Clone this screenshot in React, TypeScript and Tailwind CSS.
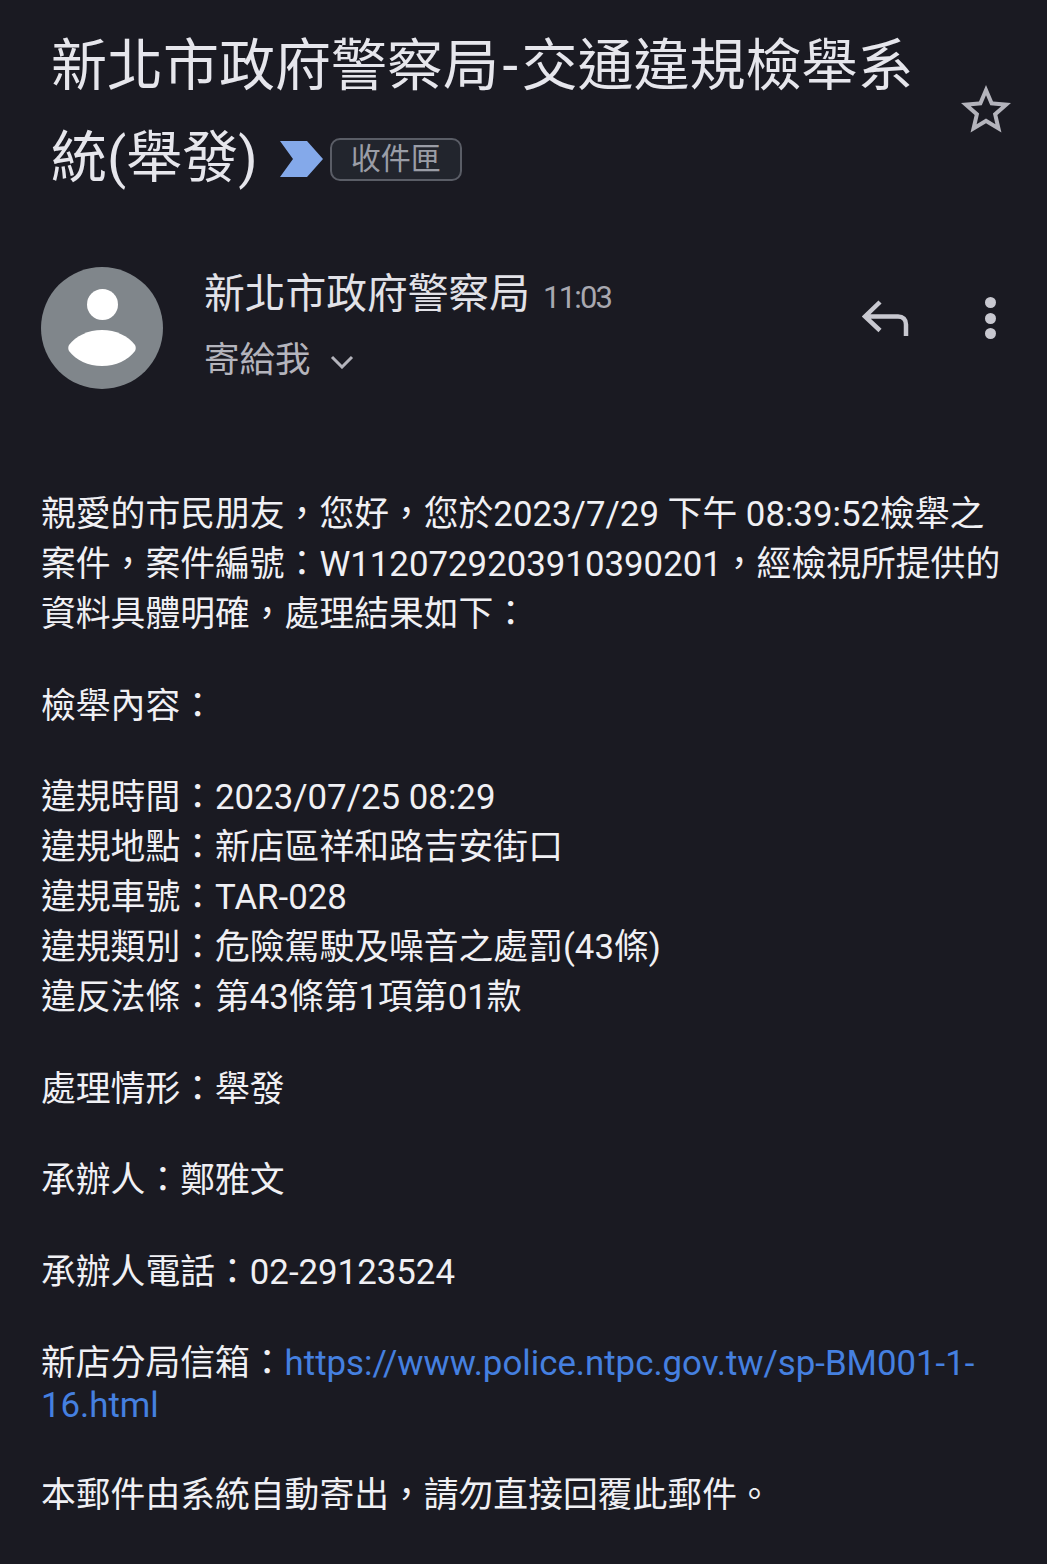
function Avatar() {
  return (
    <div className="w-[122px] h-[122px] shrink-0 rounded-full bg-[#80868b] flex flex-col items-center pt-[22px]">
      <div className="w-[31px] h-[31px] rounded-full bg-white" />
      <svg width="68" height="36" viewBox="0 0 68 36" className="mt-[10px]">
        <path d="M1 15C8 6 20 0 34 0s26 6 33 15c1 2 1 4 0 6-7 9-19 15-33 15S8 30 1 21c-1-2-1-4 0-6z" fill="#fff" />
      </svg>
    </div>
  );
}

function App() {
  return (
    <div
      className="w-[1047px] h-[1564px] overflow-hidden bg-[#1a1a22] text-[#f0f0f4]"
      style={{ fontFamily: 'Roboto, "Noto Sans CJK TC", sans-serif' }}
    >
      <div className="flex pt-[20px] pl-[51px]">
        <h1 className="w-[881px] h-[184px] text-[56px] leading-[92px] font-normal text-[#e6e6ec]">
          新北市政府警察局<span className="px-[3.500px]">-</span>交通違規檢舉系統(舉發)
          <span className="inline-flex items-center align-[1px] ml-[22px] gap-[7px] translate-y-[1px]">
            <svg width="43" height="36" viewBox="0 0 43 36">
              <path d="M0 0h27l16 18-16 18H0l13-18z" fill="#84a9ea" />
            </svg>
            <span className="h-[43px] w-[132px] flex items-center justify-center rounded-[10px] border-2 border-[#5a5d66] bg-[#22252d] text-[30px] leading-none text-[#9a9da6]">
              收件匣
            </span>
          </span>
        </h1>
        <svg width="60" height="60" viewBox="0 0 24 24" fill="#b4b4bc" className="ml-[24px] mt-[60px]">
          <path d="M22 9.24l-7.19-.62L12 2 9.19 8.63 2 9.24l5.46 4.73L5.82 21 12 17.27 18.18 21l-1.63-7.03L22 9.24zM12 15.4l-3.76 2.27 1-4.28-3.32-2.88 4.38-.38L12 6.1l1.71 4.04 4.38.38-3.32 2.88 1 4.28L12 15.4z" />
        </svg>
      </div>

      <div className="flex mt-[63px] pl-[41px]">
        <Avatar />
        <div className="ml-[41px] w-[659px]">
          <div className="flex items-center h-[54px]">
            <span className="text-[40.750px] leading-none text-[#e2e2e8]">新北市政府警察局</span>
            <span className="ml-[13px] mt-[6px] text-[31px] leading-none tracking-[-1.800px] text-[#a8a8b0]">11:03</span>
          </div>
          <div className="flex items-center mt-[20px] h-[40px]">
            <span className="text-[35.500px] leading-none text-[#b4b4bc]">寄給我</span>
            <svg width="24" height="14" viewBox="0 0 24 14" className="ml-[19px] mt-[1px]" fill="none" stroke="#b4b4bc" strokeWidth="3">
              <path d="M2 2l10 10L22 2" />
            </svg>
          </div>
        </div>
        <div className="flex items-center h-[102px]">
          <svg width="48" height="38" viewBox="0 0 48 38" fill="none" stroke="#c8c8d0" strokeWidth="4.5" className="ml-[-1px]">
            <path d="M18 3L3 17.500l15 14M3 17.500h33c5 0 8 3 8 8V37" />
          </svg>
          <div className="ml-[75px] flex flex-col gap-[4.500px]">
            <div className="w-[11px] h-[11px] rounded-full bg-[#c8c8d0]" />
            <div className="w-[11px] h-[11px] rounded-full bg-[#c8c8d0]" />
            <div className="w-[11px] h-[11px] rounded-full bg-[#c8c8d0]" />
          </div>
        </div>
      </div>

      <div className="mt-[97px] pl-[41px] w-[1012px] text-[34.8px] leading-[normal] flex flex-col gap-[41.500px]">
        <p>親愛的市民朋友，您好，您於2023/7/29 下午 08:39:52檢舉之案件，案件編號：W1120729203910390201，經檢視所提供的資料具體明確，處理結果如下：</p>
        <p>檢舉內容：</p>
        <div>
          <p>違規時間：2023/07/25 08:29</p>
          <p>違規地點：新店區祥和路吉安街口</p>
          <p>違規車號：TAR-028</p>
          <p>違規類別：危險駕駛及噪音之處罰(43條)</p>
          <p>違反法條：第43條第1項第01款</p>
        </div>
        <p>處理情形：舉發</p>
        <p>承辦人：鄭雅文</p>
        <p>承辦人電話：02-29123524</p>
        <p>
          新店分局信箱：
          <a href="#" className="text-[#4580e0]">https://www.police.ntpc.gov.tw/sp-BM001-1-16.html</a>
        </p>
        <p>本郵件由系統自動寄出，請勿直接回覆此郵件。</p>
      </div>
    </div>
  );
}

export default App;
